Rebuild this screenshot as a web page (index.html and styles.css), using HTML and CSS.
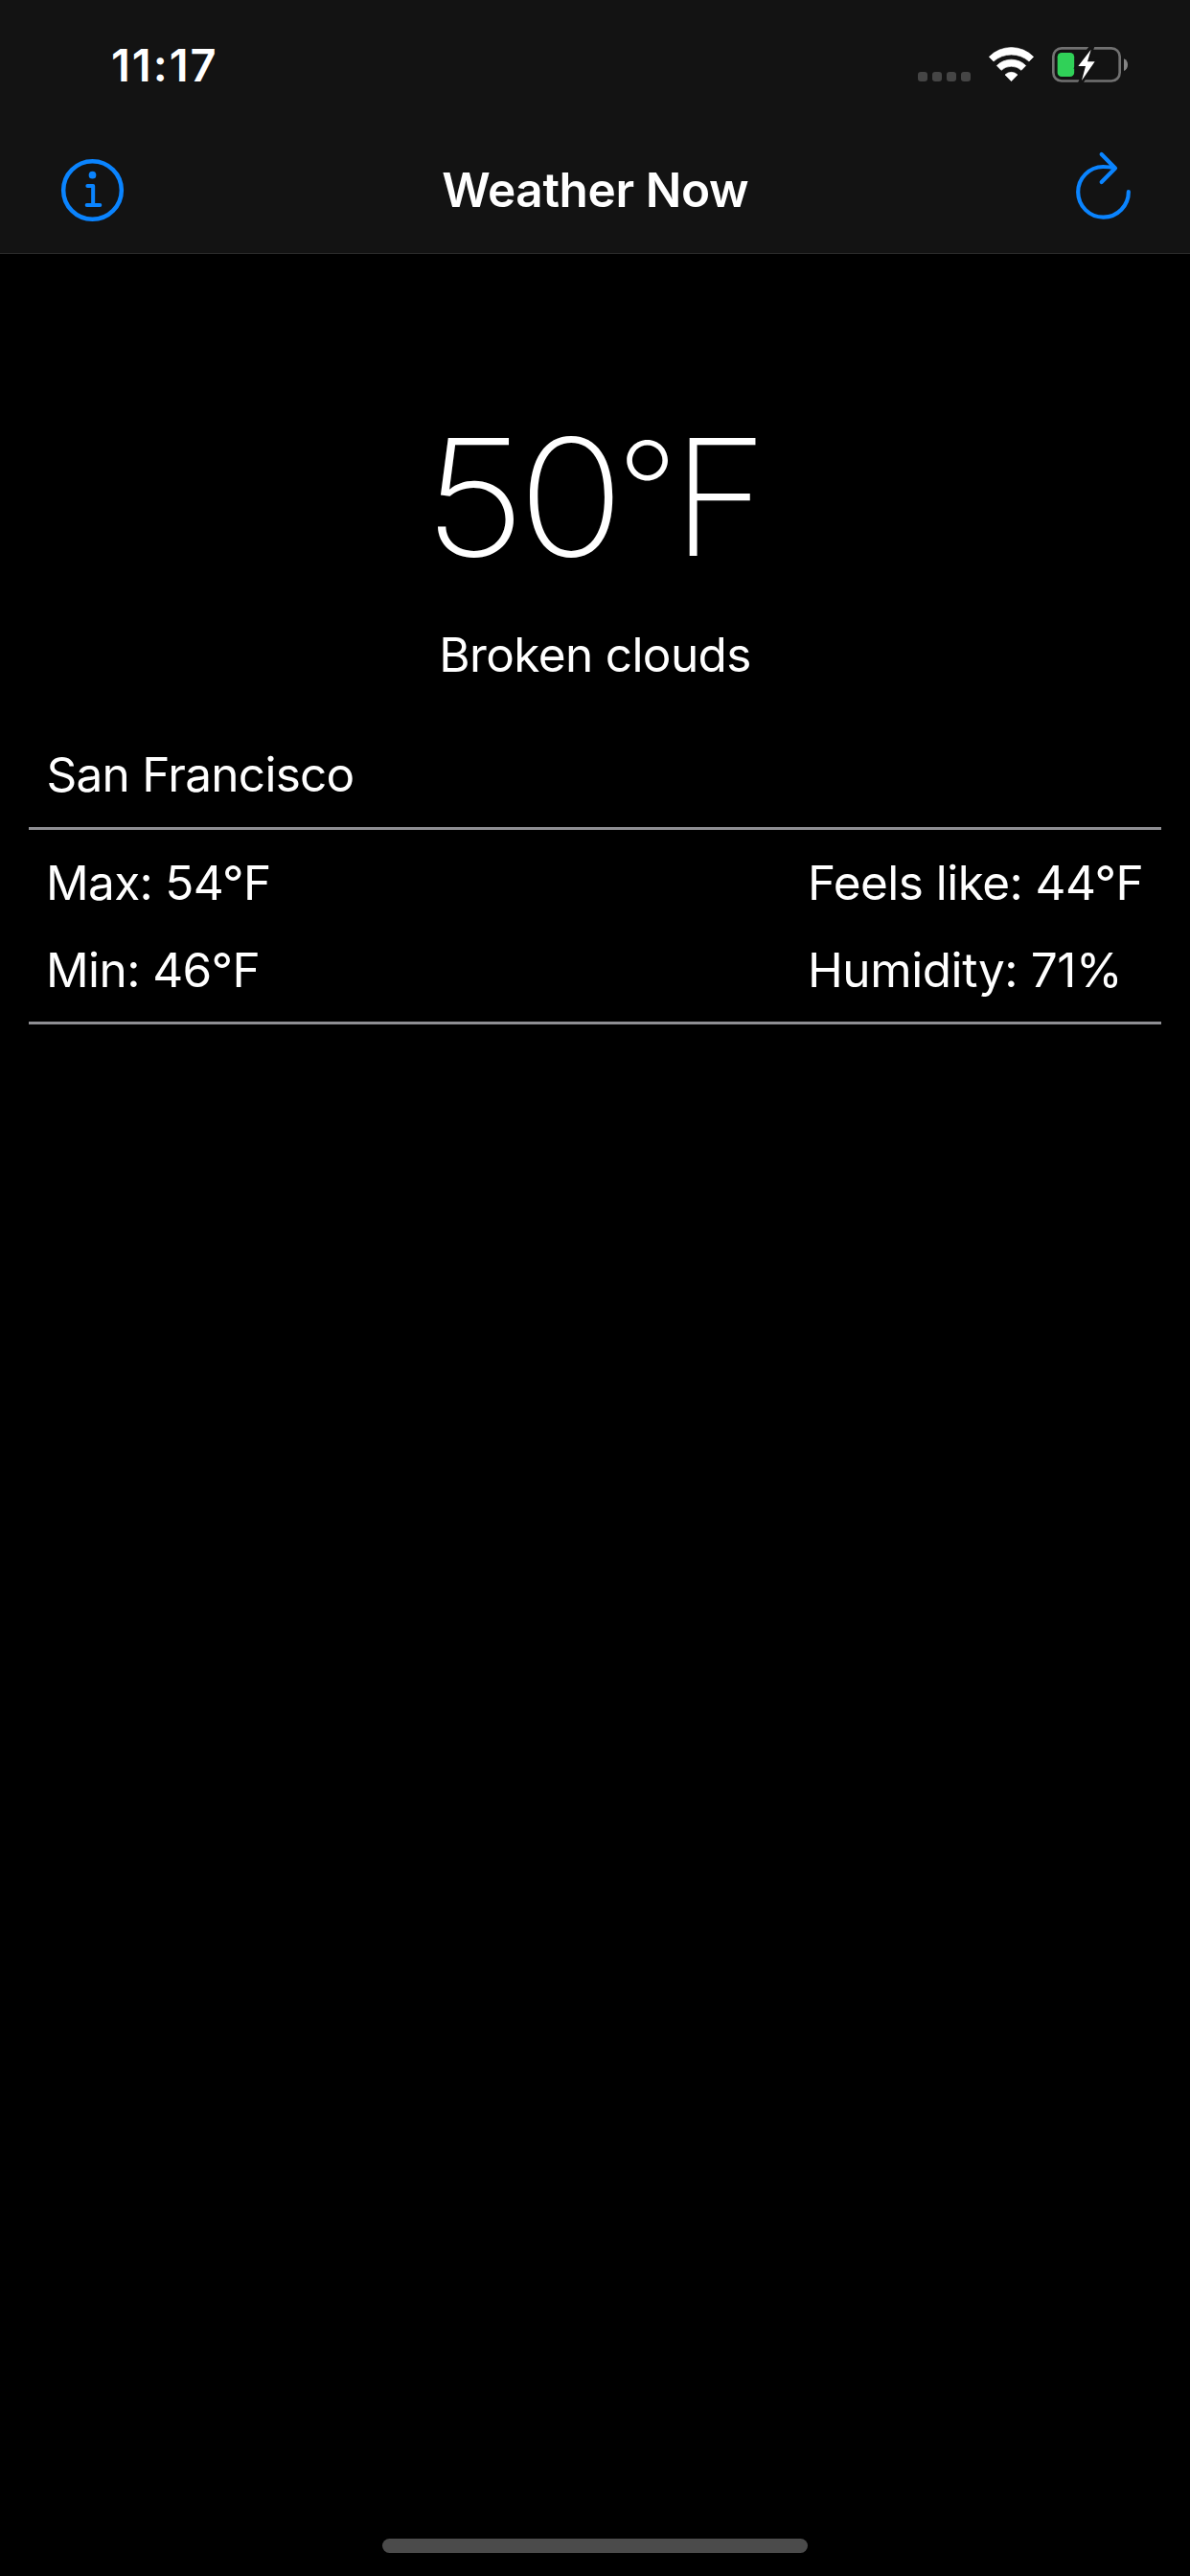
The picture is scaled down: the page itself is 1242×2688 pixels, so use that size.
FILE: index.html
```
<!DOCTYPE html>
<html lang="en">
<head>
<meta charset="utf-8">
<title>Weather Now</title>
<link rel="stylesheet" href="styles.css">
</head>
<body>
<div class="screen">
  <header class="header">
    <div class="status">
      <span class="time">11:17</span>
      <div class="indicators">
        <div class="cellular"><i></i><i></i><i></i><i></i></div>
        <svg class="wifi" viewBox="273 54 147 114">
          <g fill="#fff" stroke="#fff" stroke-width="2" stroke-linejoin="round">
            <path d="M277 88A97 97 0 0 1 416 88L402 102A84 84 0 0 0 291 102Z"/>
            <path d="M301 115.500A64 64 0 0 1 392 115.500L378 130A46 46 0 0 0 315 130Z"/>
            <path d="M327 144A28 28 0 0 1 366 144L346.500 164Z"/>
          </g>
        </svg>
        <svg class="battery" viewBox="471 54 243 117">
          <rect x="478" y="61" width="208" height="102.500" rx="26" fill="none" stroke="#717171" stroke-width="8"/>
          <rect x="491" y="75" width="52.500" height="75" rx="13" fill="#30d158"/>
          <path d="M699 94C715 100 715 126 699 132Z" fill="#858585"/>
          <path d="M591 54H608L602 70H579ZM561 156H579L571 171H554Z" fill="#131313"/>
          <path d="M596 65L556 117H579L567 162L608 103H585Z" fill="#131313" stroke="#131313" stroke-width="15"/>
          <path d="M596 65L556 117H579L567 162L608 103H585Z" fill="#fff"/>
        </svg>
      </div>
    </div>
    <nav class="navbar">
      <svg class="info" viewBox="39 45 201 201">
        <g fill="none" stroke="#0a84ff" stroke-linecap="round" stroke-linejoin="round">
          <circle cx="139.500" cy="145.500" r="91" stroke-width="13.500"/>
          <path d="M124 132H141.500V192M122 192H163" stroke-width="12"/>
        </g>
        <circle cx="139.500" cy="98" r="11.500" fill="#0a84ff"/>
      </svg>
      <h1 class="title">Weather Now</h1>
      <svg class="refresh" viewBox="60 54 177 216">
        <path d="M227.500 180A79 79 0 1 1 148 102Q168 102 185 106.500M143 63L186 106.500L143 150" fill="none" stroke="#0a84ff" stroke-width="12.500" stroke-linecap="round" stroke-linejoin="round"/>
      </svg>
    </nav>
  </header>
  <main class="content">
    <div class="temperature"><span class="digits">50</span><span class="degree">°</span><span class="unit">F</span></div>
    <p class="conditions">Broken clouds</p>
    <p class="city">San Francisco</p>
    <section class="details">
      <div class="column">
        <p class="max">Max: 54°F</p>
        <p class="min">Min: 46°F</p>
      </div>
      <div class="column column-right">
        <p class="feels">Feels like: 44°F</p>
        <p class="humidity">Humidity: 71%</p>
      </div>
    </section>
  </main>
  <div class="home-indicator"></div>
</div>
</body>
</html>
```
FILE: styles.css
```
* { box-sizing: border-box; }
body, h1, p { margin: 0; }
body { background: #000; color: #fff; font: 400 49.5px/90px Inter, sans-serif; white-space: nowrap; }
svg { display: block; }
.screen { width: 1242px; height: 2688px; display: flex; flex-direction: column; }
.header { height: 265px; background: #131313; border-bottom: 1px solid #2b2b2b; }
.status { height: 132px; display: flex; justify-content: space-between; align-items: flex-start; padding: 48px 64px 0 116px; }
.time { font-size: 47px; font-weight: 600; line-height: 40px; letter-spacing: 2px; }
.indicators { display: flex; align-items: flex-start; }
.cellular { display: flex; gap: 5px; padding-top: 27px; margin-right: 18px; }
.cellular i { width: 10px; height: 10px; border-radius: 3px; background: #454545; }
.wifi { width: 49px; height: 38px; margin-right: 17px; }
.battery { width: 81px; height: 39px; }
.navbar { height: 132px; display: flex; justify-content: space-between; padding: 0 61px 0 63px; }
.info { width: 67px; height: 67px; margin-top: 33px; }
.title { font-size: 49.5px; font-weight: 600; line-height: 60px; letter-spacing: -0.36px; margin: 36px 9.4px 0 0; }
.refresh { width: 59px; height: 72px; margin-top: 26px; }
.content { flex: 1; padding: 154px 30px 0; }
.temperature { display: flex; height: 200px; padding-left: 411.500px; font-size: 169px; font-weight: 200; line-height: 200px; }
.digits { width: 202.600px; letter-spacing: -7.300px; transform: scaleX(1.09); transform-origin: left; }
.degree { width: 58px; font-size: 139px; line-height: 184px; font-weight: 200; }
.conditions { margin-top: 19px; text-align: center; letter-spacing: -0.620px; }
.city { margin-top: 35px; height: 103px; padding-left: 18.500px; letter-spacing: -0.730px; border-bottom: 3px solid #8e8e93; }
.details { display: flex; justify-content: space-between; height: 203px; padding: 10px 0 0 18px; border-bottom: 3px solid #8e8e93; }
.column p { height: 91px; }
.column-right { width: 369px; }
.max { letter-spacing: -0.680px; }
.min { letter-spacing: -0.600px; }
.feels { letter-spacing: -0.540px; }
.humidity { letter-spacing: -0.420px; }
.home-indicator { align-self: center; width: 444px; height: 15px; margin-bottom: 24px; border-radius: 8px; background: #4b4b4b; }
```
